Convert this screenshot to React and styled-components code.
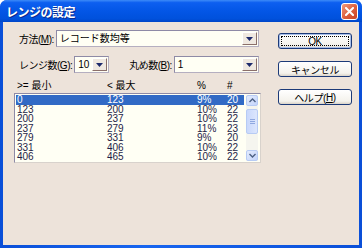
import React from 'react';
import styled, { createGlobalStyle } from 'styled-components';

const GlobalStyle = createGlobalStyle`
  html, body {
    margin: 0;
    padding: 0;
    background: #ffffff;
  }
  body {
    font-family: "Liberation Sans", "Noto Sans CJK JP", sans-serif;
  }
`;

const rows = [
  { min: '0', max: '123', pct: '9%', count: '20' },
  { min: '123', max: '200', pct: '10%', count: '22' },
  { min: '200', max: '237', pct: '10%', count: '22' },
  { min: '237', max: '279', pct: '11%', count: '23' },
  { min: '279', max: '331', pct: '9%', count: '20' },
  { min: '331', max: '406', pct: '10%', count: '22' },
  { min: '406', max: '465', pct: '10%', count: '22' },
];

const Window = styled.div`
  width: 362px;
  height: 248px;
  box-sizing: border-box;
  display: flex;
  flex-direction: column;
  background: #0a55e2;
  border-radius: 7px 7px 0 0;
  overflow: hidden;
`;

const TitleBar = styled.div`
  height: 22px;
  display: flex;
  align-items: center;
  padding: 0 4px 0 6px;
  background: linear-gradient(#3d8bf8 0%, #0d5ff0 12%, #0356e6 50%, #0051dc 85%, #0046c8 100%);
`;

const Title = styled.div`
  color: #ffffff;
  font-size: 12px;
  font-weight: bold;
  letter-spacing: -0.5px;
  text-shadow: 1px 1px #0b2a8f;
`;

const CloseButton = styled.div`
  margin-left: auto;
  width: 15px;
  height: 15px;
  border: 1px solid #ffffff;
  border-radius: 3px;
  display: flex;
  align-items: center;
  justify-content: center;
  background: linear-gradient(135deg, #ee9a7e, #dd5e3c 55%, #c94424);
`;

const Frame = styled.div`
  flex: 1;
  display: flex;
  padding: 0 3px 3px 3px;
  background: linear-gradient(90deg, #0a4fd8, #1865ef 40%, #0a4fd8);
`;

const Body = styled.div`
  flex: 1;
  display: flex;
  background: #ede3da;
  padding: 8px 0 0 11px;
`;

const Main = styled.div`
  width: 247px;
  display: flex;
  flex-direction: column;
`;

const FieldRow = styled.div`
  display: flex;
  align-items: center;
  height: 17px;
  margin-top: ${(p) => p.$top || 0}px;
  padding: 0 2px 0 5px;
`;

const Label = styled.div`
  flex: none;
  margin-left: ${(p) => p.$left || 0}px;
  margin-right: 2px;
  font-size: 10px;
  color: #000;
  white-space: nowrap;
  letter-spacing: -0.5px;
`;

const ComboBox = styled.div`
  flex: ${(p) => (p.$width ? `0 0 ${p.$width}px` : 1)};
  height: 17px;
  box-sizing: border-box;
  display: flex;
  align-items: stretch;
  border: 1px solid;
  border-color: #8e8aa6 #b5afc0 #b5afc0 #8e8aa6;
  background: #fffff4;
`;

const ComboValue = styled.div`
  flex: 1;
  font-size: 10px;
  line-height: 15px;
  padding-left: 3px;
  color: #000;
  white-space: nowrap;
  overflow: hidden;
`;

const DropButton = styled.div`
  width: 15px;
  margin: 1px;
  box-sizing: border-box;
  display: flex;
  align-items: center;
  justify-content: center;
  background: #efe8e0;
  border: 1px solid;
  border-color: #ffffff #8b6f6a #8b6f6a #ffffff;
`;

const ColumnHeader = styled.div`
  display: grid;
  grid-template-columns: 90px 90px 30px 1fr;
  margin-top: 7px;
  padding-left: 3px;
  height: 12px;
  line-height: 12px;
  font-size: 10px;
  color: #000;
`;

const ListBox = styled.div`
  margin-top: 1px;
  height: 70px;
  box-sizing: border-box;
  display: flex;
  border: 1px solid;
  border-color: #8e8aa6 #d8d2cc #d8d2cc #8e8aa6;
  background: #fffff4;
  padding: 1px 2px 1px 1px;
`;

const Rows = styled.div`
  flex: 1;
  display: flex;
  flex-direction: column;
`;

const Row = styled.div`
  display: grid;
  grid-template-columns: 90px 90px 30px 1fr;
  height: 9.5px;
  line-height: 9.5px;
  padding-left: 1px;
  font-size: 10px;
  color: ${(p) => (p.$selected ? '#ffffff' : '#1e1e48')};
  background: ${(p) => (p.$selected ? '#316ac5' : 'transparent')};
`;

const Scrollbar = styled.div`
  width: 12px;
  margin-left: 2px;
  display: flex;
  flex-direction: column;
  background: #f5f5ef;
`;

const ScrollButton = styled.div`
  height: 11px;
  box-sizing: border-box;
  display: flex;
  align-items: center;
  justify-content: center;
  border: 1px solid #b7cbf4;
  border-radius: 2px;
  background: linear-gradient(135deg, #e3ebfd, #c4d5fb);
`;

const Track = styled.div`
  flex: 1;
  padding-top: 3px;
`;

const Thumb = styled.div`
  height: 25px;
  box-sizing: border-box;
  border: 1px solid #b7cbf4;
  border-radius: 2px;
  background: linear-gradient(90deg, #c9d8fc, #dce6fd);
  display: flex;
  flex-direction: column;
  justify-content: center;
  align-items: center;
  gap: 1px;
`;

const Grip = styled.div`
  width: 5px;
  height: 1px;
  background: #8fa8e0;
`;

const ButtonColumn = styled.div`
  margin-left: 17px;
  padding-top: 3px;
  width: 74px;
  display: flex;
  flex-direction: column;
  gap: 12px;
`;

const Button = styled.div`
  position: relative;
  height: 16px;
  box-sizing: border-box;
  display: flex;
  align-items: center;
  justify-content: center;
  border: 1px solid #1c3a78;
  border-radius: 3px;
  background: linear-gradient(#ffffff, #f4f2ec 80%, #d9d3c8);
  box-shadow: ${(p) => (p.$default ? 'inset 0 0 0 1px #a9c0ea' : 'none')};
  font-size: 10px;
  color: #000;
  letter-spacing: -0.4px;

  &::after {
    content: '';
    display: ${(p) => (p.$default ? 'block' : 'none')};
    position: absolute;
    inset: 2px;
    border: 1px dotted #000;
  }
`;

const Arrow = () => (
  <svg width="7" height="4" viewBox="0 0 7 4">
    <path d="M0 0h7L3.5 4z" fill="#1d2a6b" />
  </svg>
);

const Combo = ({ value, width }) => (
  <ComboBox $width={width}>
    <ComboValue>{value}</ComboValue>
    <DropButton>
      <Arrow />
    </DropButton>
  </ComboBox>
);

const Chevron = ({ up }) => (
  <svg width="7" height="5" viewBox="0 0 7 5">
    <path d={up ? 'M0.5 4L3.5 1l3 3' : 'M0.5 1l3 3 3-3'} stroke="#4d6185" strokeWidth="1.4" fill="none" />
  </svg>
);

const App = () => {
  return (
    <>
      <GlobalStyle />
      <Window>
        <TitleBar>
          <Title>レンジの設定</Title>
          <CloseButton>
            <svg width="9" height="9" viewBox="0 0 9 9">
              <path d="M1 1l7 7M8 1L1 8" stroke="#fff" strokeWidth="2" strokeLinecap="square" />
            </svg>
          </CloseButton>
        </TitleBar>
        <Frame>
          <Body>
            <Main>
              <FieldRow>
                <Label>方法(<u>M</u>):</Label>
                <Combo value="レコード数均等" />
              </FieldRow>
              <FieldRow $top={9}>
                <Label>レンジ数(<u>G</u>):</Label>
                <Combo value="10" width={35} />
                <Label $left={20}>丸め数(<u>B</u>):</Label>
                <Combo value="1" />
              </FieldRow>
              <ColumnHeader>
                <span>&gt;= 最小</span>
                <span>&lt; 最大</span>
                <span>%</span>
                <span>#</span>
              </ColumnHeader>
              <ListBox>
                <Rows>
                  {rows.map((r, i) => (
                    <Row key={r.min} $selected={i === 0}>
                      <span>{r.min}</span>
                      <span>{r.max}</span>
                      <span>{r.pct}</span>
                      <span>{r.count}</span>
                    </Row>
                  ))}
                </Rows>
                <Scrollbar>
                  <ScrollButton>
                    <Chevron up />
                  </ScrollButton>
                  <Track>
                    <Thumb>
                      <Grip />
                      <Grip />
                      <Grip />
                    </Thumb>
                  </Track>
                  <ScrollButton>
                    <Chevron />
                  </ScrollButton>
                </Scrollbar>
              </ListBox>
            </Main>
            <ButtonColumn>
              <Button $default>OK</Button>
              <Button>キャンセル</Button>
              <Button>ヘルプ(<u>H</u>)</Button>
            </ButtonColumn>
          </Body>
        </Frame>
      </Window>
    </>
  );
};

export default App;
